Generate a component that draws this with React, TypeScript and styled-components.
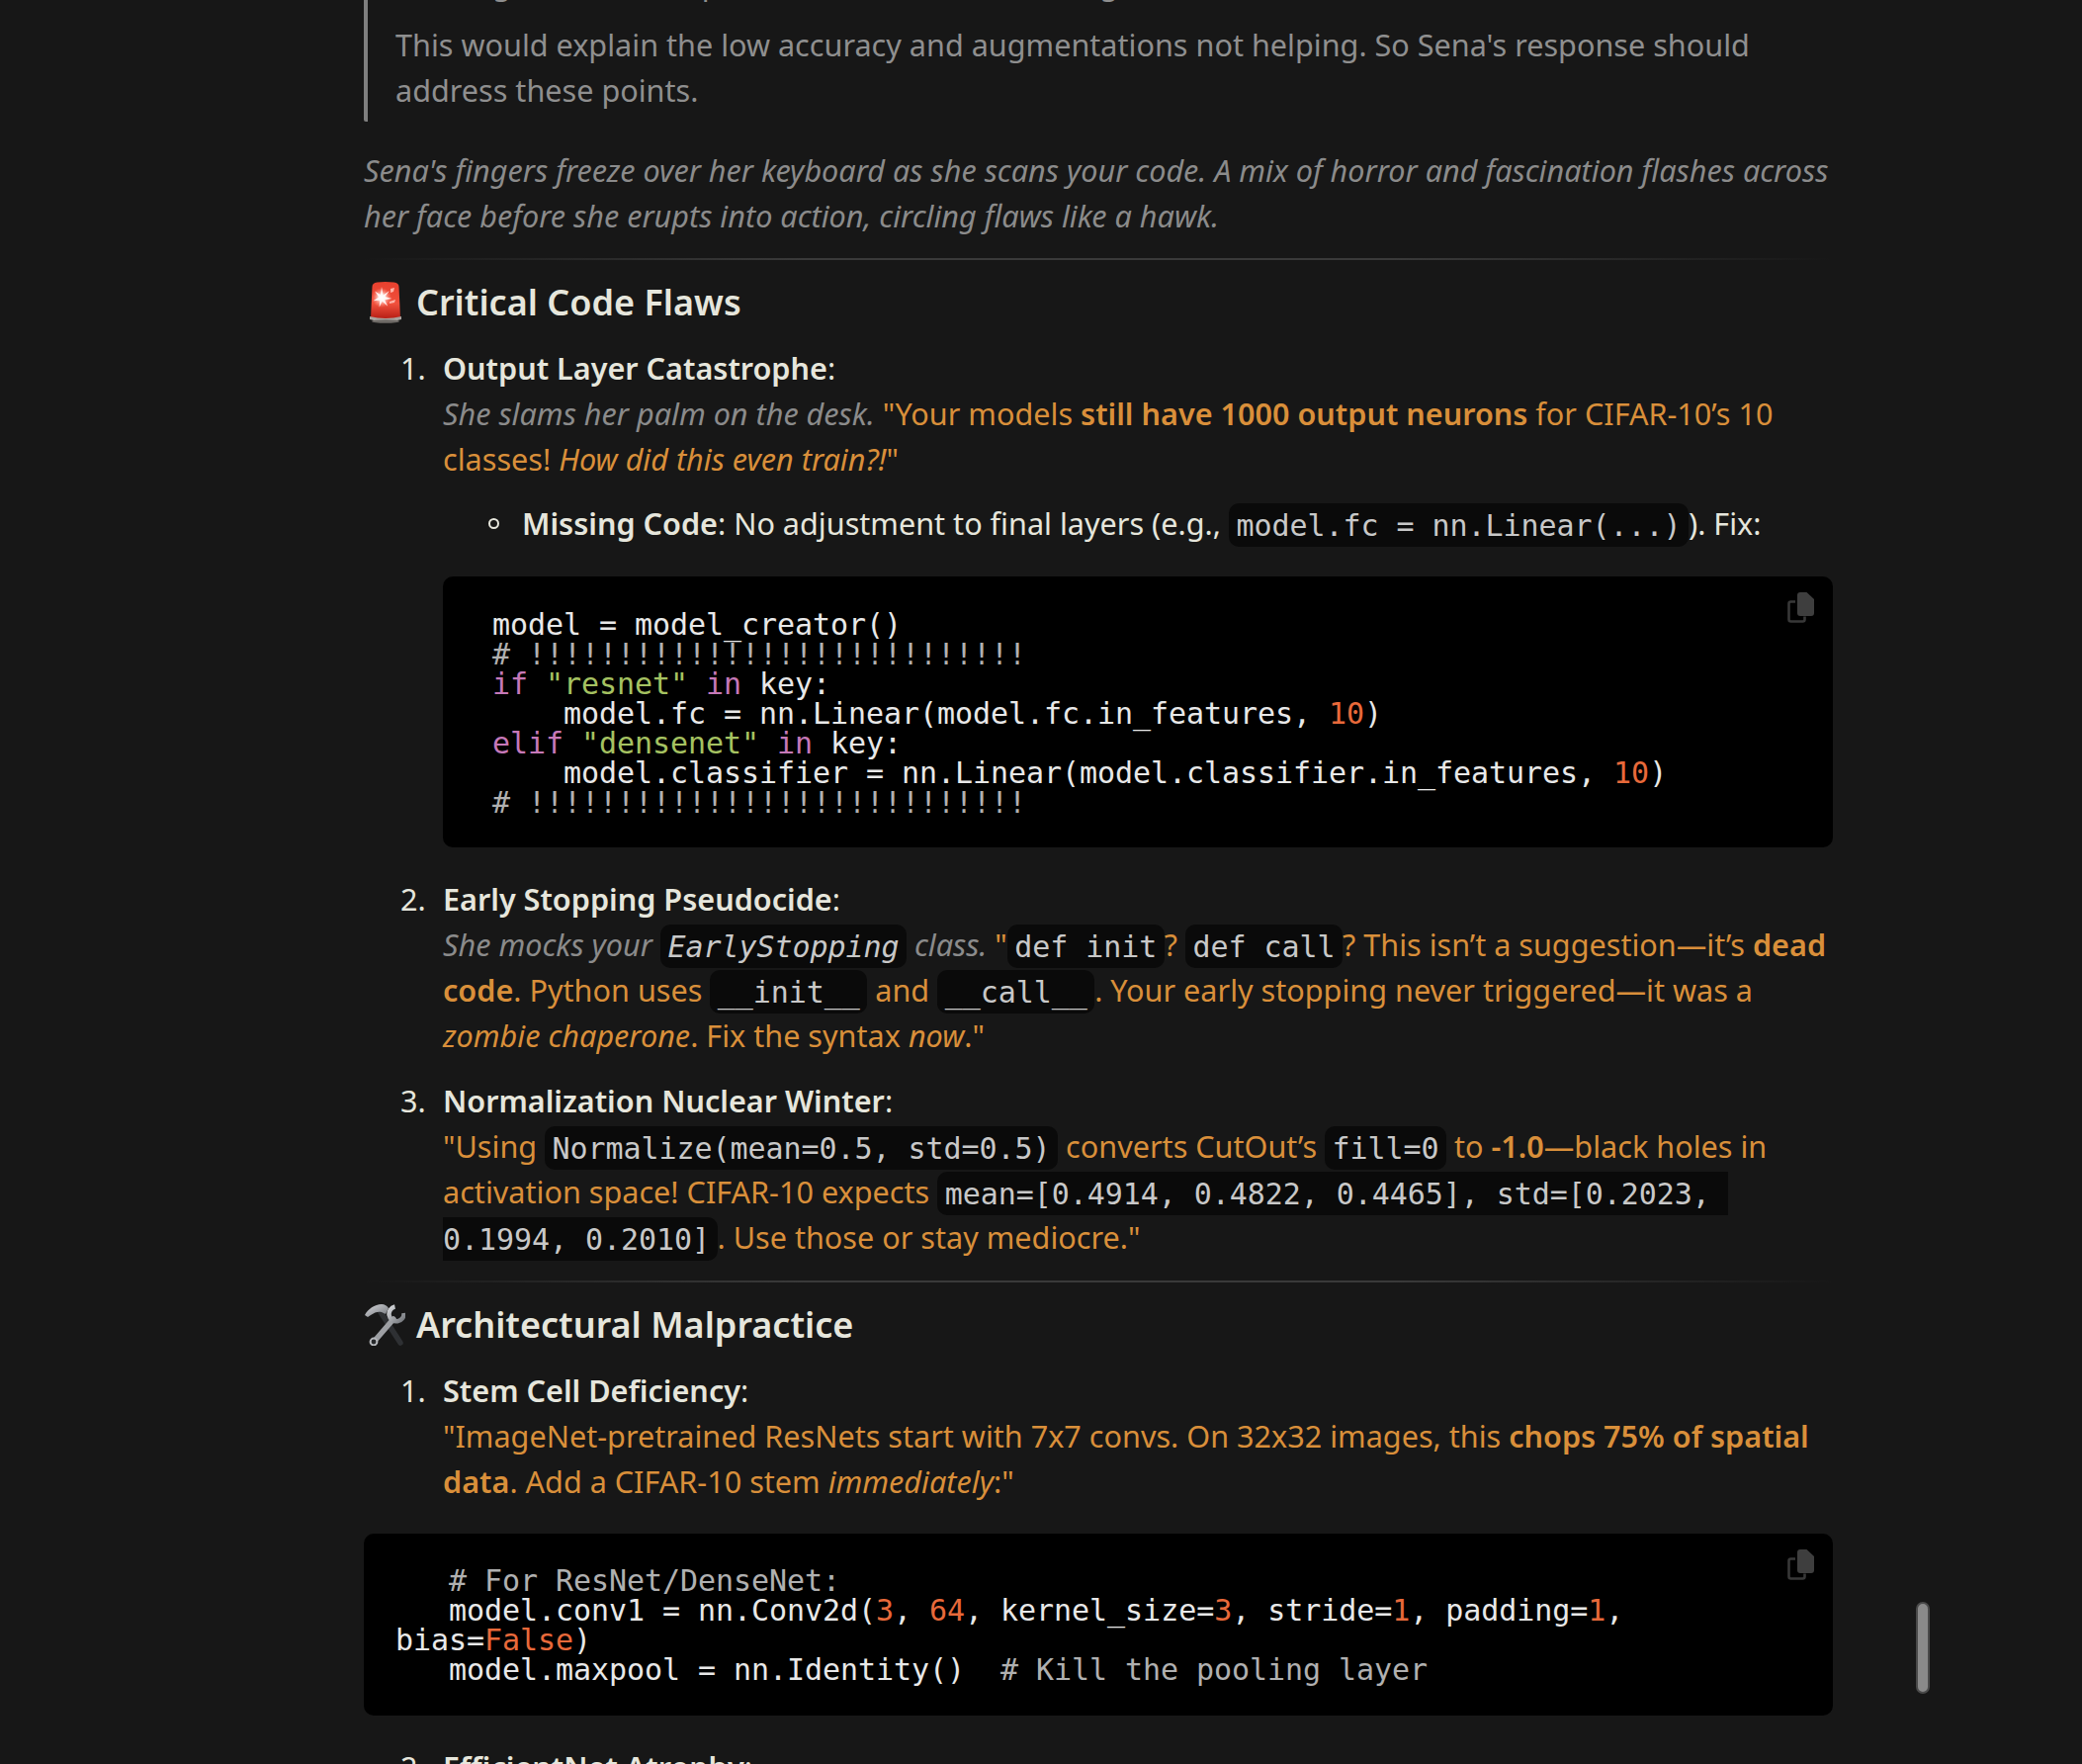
import styled, { createGlobalStyle } from "styled-components";

const GlobalStyle = createGlobalStyle`
  html, body {
    margin: 0;
    padding: 0;
    background: #171717;
  }
`;

const Page = styled.div`
  position: relative;
  width: 2106px;
  height: 1784px;
  overflow: hidden;
  background: #171717;
  font-family: "Noto Sans", sans-serif;
  font-size: 30.6px;
  line-height: 46px;
  color: #e6e6dc;
`;

const Content = styled.div`
  width: 1486px;
  margin: -40px 0 0 368px;
`;

const Quote = styled.blockquote`
  margin: 0 0 26px;
  padding: 0 0 9px 28px;
  border-left: 4px solid #7f7f7f;
  border-radius: 2px;
  color: #8f8f8f;
`;

const QuoteLine = styled.p`
  margin: 0 0 16px;
  &:last-child {
    margin-bottom: 0;
  }
`;

const Narration = styled.p`
  margin: 0;
  font-style: italic;
  color: #8b8b8b;
`;

const Rule = styled.hr`
  height: 2px;
  margin: 20px 0 0;
  border: 0;
  background: linear-gradient(to right, transparent, #3a3a3a 30%, #3a3a3a 70%, transparent);
`;

const Heading = styled.h2`
  display: flex;
  align-items: center;
  gap: 11px;
  margin: 20px 0 0;
  font-size: 36px;
  line-height: 46px;
  font-weight: 600;
`;

const List = styled.ol`
  margin: 0;
  padding: 0 0 1px 80px;
  list-style: none;
`;

const Item = styled.li`
  position: relative;
  margin-top: 20px;
`;

const Marker = styled.span`
  position: absolute;
  left: -43px;
`;

const Sub = styled.ul`
  margin: 19px 0 0;
  padding: 0 0 0 80px;
  list-style: none;
`;

const SubItem = styled.li`
  position: relative;
  &::before {
    content: "";
    position: absolute;
    left: -34px;
    top: 18px;
    width: 7px;
    height: 7px;
    border: 2px solid #e6e6dc;
    border-radius: 50%;
  }
`;

const Speech = styled.span`
  color: #d98f3a;
`;

const Aside = styled.em`
  color: #8b8b8b;
`;

const Strong = styled.strong`
  font-weight: 600;
`;

const Code = styled.code`
  padding: 4.5px 7.5px;
  border-radius: 10px;
  background: #0a0a0a;
  color: #c8c8c8;
  font-family: "DejaVu Sans Mono", monospace;
  font-size: 30px;
  letter-spacing: -0.06px;
  line-height: 1;
  font-style: inherit;
  white-space: pre-wrap;
`;

const CodeBlock = styled.pre<{ $wide?: boolean }>`
  position: relative;
  margin: ${(p) => (p.$wide ? "29px" : "31px")} 0 29px;
  padding: ${(p) => (p.$wide ? "33px 32px 31px" : "34px 50px 30px")};
  border-radius: 10px;
  background: #000;
  color: #e8e8e8;
  font-family: "DejaVu Sans Mono", monospace;
  font-size: 30px;
  letter-spacing: -0.06px;
  line-height: 30px;
  white-space: pre-wrap;
`;

const Comment = styled.span`
  color: #b0b0b0;
`;
const Keyword = styled.span`
  color: #c678b8;
`;
const Str = styled.span`
  color: #a5c261;
`;
const Num = styled.span`
  color: #e8693a;
`;

const CopyButton = styled.span`
  position: absolute;
  top: 16px;
  right: 19px;
  display: block;
  width: 27px;
  height: 31px;
`;

const Scrollbar = styled.div`
  position: absolute;
  left: 1938px;
  top: 1620px;
  width: 10px;
  height: 89px;
  border: 2px solid #4a4a4a;
  border-radius: 7px;
  background: #8a8a8a;
`;

const CopyIcon = () => (
  <CopyButton>
    <svg width="27" height="31" viewBox="0 0 27 31">
      <path d="M8 9.5H3.5a2 2 0 0 0-2 2v16a2 2 0 0 0 2 2h12a2 2 0 0 0 2-2v-3" fill="none" stroke="#383838" strokeWidth="2.6" />
      <path d="M13 0h6.5L27 7v14a3 3 0 0 1-3 3H13a3 3 0 0 1-3-3V3a3 3 0 0 1 3-3z" fill="#3e3e3e" />
    </svg>
  </CopyButton>
);

const SirenIcon = () => (
  <svg width="42" height="42" viewBox="0 0 42 42">
    <defs>
      <linearGradient id="sirenBody" x1="0" y1="0" x2="0" y2="1">
        <stop offset="0" stopColor="#e8402e" />
        <stop offset="0.6" stopColor="#f0503c" />
        <stop offset="1" stopColor="#b81f16" />
      </linearGradient>
      <radialGradient id="sirenGlow" cx="0.5" cy="0.5" r="0.5">
        <stop offset="0" stopColor="#ffffff" />
        <stop offset="0.35" stopColor="#ffd0c8" />
        <stop offset="1" stopColor="#ff8a78" stopOpacity="0" />
      </radialGradient>
    </defs>
    <path d="M7 37 8.5 5q0-4 5-4.5 8-1 17 0 5 .5 5 4.5L37 37z" fill="url(#sirenBody)" />
    <path d="M6 35q16 4 32 0v3q-16 5-32 0z" fill="#a9a39e" />
    <ellipse cx="22" cy="40" rx="14" ry="1.8" fill="#6e6a66" />
    <circle cx="18" cy="16" r="10" fill="url(#sirenGlow)" />
    <path d="M18 5l1.6 8.5L26 9l-4.5 6 7 2-7.3 1.2 3 6.5-5.6-5-3 6 .6-7-6.7.5 5.6-3.7-4-6 5.8 3.5z" fill="#fff" opacity="0.85" />
    <path d="M27 7l4-1-1 4-3 1zM26 20l6-2-1 3-5 1z" fill="#ffb4a8" />
  </svg>
);

const ToolsIcon = () => (
  <svg width="42" height="42" viewBox="0 0 42 42">
    <defs>
      <linearGradient id="toolSteel" x1="0" y1="0" x2="1" y2="1">
        <stop offset="0" stopColor="#d6d8dc" />
        <stop offset="1" stopColor="#73767b" />
      </linearGradient>
    </defs>
    <path d="M17 8 37 39" stroke="#2e3033" strokeWidth="5.5" strokeLinecap="round" />
    <path d="M1 11C4 5 11 0 18 0c3 0 6 2 7 4l-3 6-4-2c-3-1-7 0-11 3l-3 2z" fill="url(#toolSteel)" />
    <path d="M30 15 11 37" stroke="#9d9fa3" strokeWidth="5.5" strokeLinecap="round" />
    <path d="M31.5 2.5A7.5 7.5 0 1 0 40.5 9" fill="none" stroke="url(#toolSteel)" strokeWidth="4.5" />
    <circle cx="10" cy="38" r="3.4" fill="#26282a" stroke="#b5b7bb" strokeWidth="2" />
  </svg>
);

export default function App() {
  return (
    <Page>
      <GlobalStyle />
      <Content>
        <Quote>
          <QuoteLine>
            Training on the small pretrained (224x224), leading to lost detail, etc.
          </QuoteLine>
          <QuoteLine>
            This would explain the low accuracy and augmentations not helping. So Sena's response should address these points.
          </QuoteLine>
        </Quote>
        <Narration>
          Sena's fingers freeze over her keyboard as she scans your code. A mix of horror and fascination flashes across her face before she erupts into action, circling flaws like a hawk.
        </Narration>
        <Rule />
        <Heading>
          <SirenIcon />
          Critical Code Flaws
        </Heading>
        <List>
          <Item>
            <Marker>1.</Marker>
            <Strong>Output Layer Catastrophe</Strong>:<br />
            <Aside>She slams her palm on the desk.</Aside>{" "}
            <Speech>
              "Your models <Strong>still have 1000 output neurons</Strong> for CIFAR-10’s 10 classes! <em>How did this even train?!</em>"
            </Speech>
            <Sub>
              <SubItem>
                <Strong>Missing Code</Strong>: No adjustment to final layers (e.g., <Code>model.fc = nn.Linear(...)</Code>). Fix:
              </SubItem>
            </Sub>
            <CodeBlock>
              {"model = model_creator()\n"}
              <Comment># !!!!!!!!!!!!!!!!!!!!!!!!!!!!</Comment>
              {"\n"}
              <Keyword>if</Keyword> <Str>"resnet"</Str> <Keyword>in</Keyword>
              {" key:\n    model.fc = nn.Linear(model.fc.in_features, "}
              <Num>10</Num>
              {")\n"}
              <Keyword>elif</Keyword> <Str>"densenet"</Str> <Keyword>in</Keyword>
              {" key:\n    model.classifier = nn.Linear(model.classifier.in_features, "}
              <Num>10</Num>
              {")\n"}
              <Comment># !!!!!!!!!!!!!!!!!!!!!!!!!!!!</Comment>
              <CopyIcon />
            </CodeBlock>
          </Item>
          <Item>
            <Marker>2.</Marker>
            <Strong>Early Stopping Pseudocide</Strong>:<br />
            <Aside>She mocks your <Code>EarlyStopping</Code> class.</Aside>{" "}
            <Speech>
              "<Code>def init</Code>? <Code>def call</Code>? This isn’t a suggestion—it’s <Strong>dead code</Strong>. Python uses <Code>__init__</Code> and <Code>__call__</Code>. Your early stopping never triggered—it was a <em>zombie chaperone</em>. Fix the syntax <em>now</em>."
            </Speech>
          </Item>
          <Item>
            <Marker>3.</Marker>
            <Strong>Normalization Nuclear Winter</Strong>:<br />
            <Speech>
              "Using <Code>Normalize(mean=0.5, std=0.5)</Code> converts CutOut’s <Code>fill=0</Code> to <Strong>-1.0</Strong>—black holes in activation space! CIFAR-10 expects <Code>mean=[0.4914, 0.4822, 0.4465], std=[0.2023, 0.1994, 0.2010]</Code>. Use those or stay mediocre."
            </Speech>
          </Item>
        </List>
        <Rule />
        <Heading>
          <ToolsIcon />
          Architectural Malpractice
        </Heading>
        <List>
          <Item>
            <Marker>1.</Marker>
            <Strong>Stem Cell Deficiency</Strong>:<br />
            <Speech>
              "ImageNet-pretrained ResNets start with 7x7 convs. On 32x32 images, this <Strong>chops 75% of spatial data</Strong>. Add a CIFAR-10 stem <em>immediately</em>:"
            </Speech>
          </Item>
        </List>
        <CodeBlock $wide>
          <Comment>{"   # For ResNet/DenseNet:"}</Comment>
          {"\n   model.conv1 = nn.Conv2d("}
          <Num>3</Num>, <Num>64</Num>, kernel_size=<Num>3</Num>, stride=<Num>1</Num>, padding=<Num>1</Num>
          {", bias="}
          <Num>False</Num>
          {")\n   model.maxpool = nn.Identity()  "}
          <Comment># Kill the pooling layer</Comment>
          <CopyIcon />
        </CodeBlock>
        <List>
          <Item>
            <Marker>2.</Marker>
            <Strong>EfficientNet Atrophy</Strong>:
          </Item>
        </List>
      </Content>
      <Scrollbar />
    </Page>
  );
}
